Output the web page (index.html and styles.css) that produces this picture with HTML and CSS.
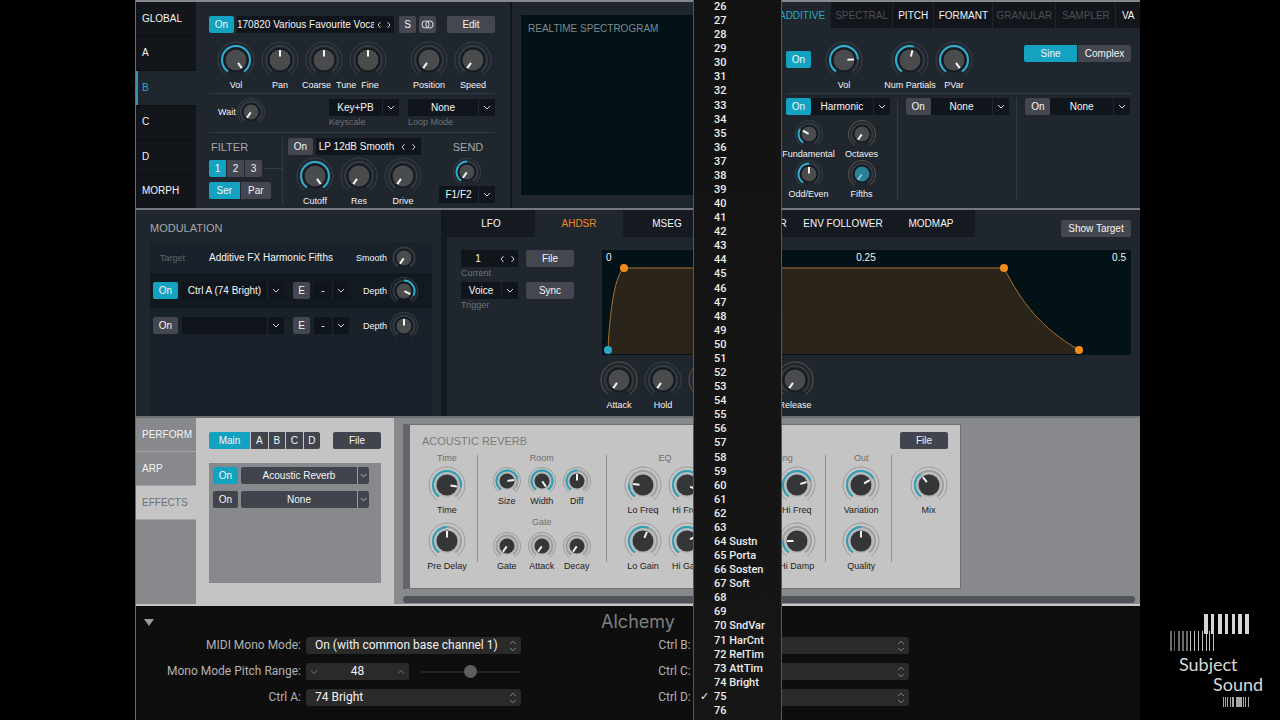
FILE: index.html
```html
<!DOCTYPE html>
<html lang="en">
<head>
<meta charset="utf-8">
<title>Alchemy</title>
<link rel="stylesheet" href="styles.css">
</head>
<body>
<svg class="defs" aria-hidden="true">
  <symbol id="down" viewBox="0 0 8 8"><path d="M1 2.5 4 5.5 7 2.5"/></symbol>
  <symbol id="up" viewBox="0 0 8 8"><path d="M1 5.5 4 2.5 7 5.5"/></symbol>
  <symbol id="left" viewBox="0 0 8 8"><path d="M5.5 1.2 3 4 5.5 6.8"/></symbol>
  <symbol id="right" viewBox="0 0 8 8"><path d="M2.5 1.2 5 4 2.5 6.8"/></symbol>
  <symbol id="updown" viewBox="0 0 8 12"><path d="M1 4.2 4 1.2 7 4.2M1 7.8 4 10.8 7 7.8"/></symbol>
  <symbol id="rings" viewBox="0 0 12 8"><circle cx="4.2" cy="4" r="3.2"/><circle cx="7.8" cy="4" r="3.2"/></symbol>
</svg>

<main class="synth">
  <section class="source">
    <nav class="side">
      <button>GLOBAL</button><button>A</button><button class="current">B</button><button>C</button><button>D</button><button>MORPH</button>
    </nav>

    <div class="osc">
      <div class="row">
        <button class="btn on">On</button>
        <div class="stepper name"><span class="value">170820 Various Favourite Voca</span><button aria-label="Previous"><svg class="ico"><use href="#left"/></svg></button><button aria-label="Next"><svg class="ico"><use href="#right"/></svg></button></div>
        <button class="btn sq">S</button>
        <button class="btn sq" aria-label="Link"><svg class="ico wide"><use href="#rings"/></svg></button>
        <button class="btn med edit">Edit</button>
      </div>
      <div class="row dials spread">
        <div class="row tight">
          <div class="dial"><i class="knob" data-v="100" data-arc="fill"></i>Vol</div>
          <div class="dial"><i class="knob" data-v="50"></i>Pan</div>
          <div class="tune">
            <div class="row tight"><div class="dial"><i class="knob" data-v="50"></i></div><div class="dial"><i class="knob" data-v="50"></i></div></div>
            <div class="tune-labels"><span>Coarse</span><span>Tune</span><span>Fine</span></div>
          </div>
        </div>
        <div class="row tight">
          <div class="dial"><i class="knob" data-v="0"></i>Position</div>
          <div class="dial"><i class="knob" data-v="0"></i>Speed</div>
        </div>
      </div>
      <div class="row scale">
        <div class="dial inline">Wait<i class="knob sm" data-v="0"></i></div>
        <label class="field keyscale"><span class="pick"><select><option>Key+PB</option></select><svg class="ico"><use href="#down"/></svg></span>Keyscale</label>
        <label class="field loop"><span class="pick"><select><option>None</option></select><svg class="ico"><use href="#down"/></svg></span>Loop Mode</label>
      </div>
      <div class="row filter">
        <div class="filter-left">
          <h2>FILTER</h2>
          <div class="wired"><div class="seg nums"><button class="on">1</button><button>2</button><button>3</button></div></div>
          <div class="seg routing"><button class="on">Ser</button><button>Par</button></div>
        </div>
        <div class="filter-mid">
          <div class="row snug"><button class="btn">On</button><div class="stepper"><span class="value">LP 12dB Smooth</span><button aria-label="Previous"><svg class="ico"><use href="#left"/></svg></button><button aria-label="Next"><svg class="ico"><use href="#right"/></svg></button></div></div>
          <div class="row filter-dials">
            <div class="dial"><i class="knob" data-v="100" data-arc="fill"></i>Cutoff</div>
            <div class="dial"><i class="knob" data-v="0"></i>Res</div>
            <div class="dial"><i class="knob" data-v="0"></i>Drive</div>
          </div>
        </div>
        <div class="send">
          <h2>SEND</h2>
          <i class="knob sm" data-v="0" data-arc="half"></i>
          <span class="pick"><select aria-label="Send routing"><option>F1/F2</option></select><svg class="ico"><use href="#down"/></svg></span>
        </div>
      </div>
    </div>

    <div class="spectro"><div class="screen">REALTIME SPECTROGRAM</div></div>

    <div class="engine">
      <nav class="engine-tabs">
        <button class="current">ADDITIVE</button><button class="off">SPECTRAL</button><button>PITCH</button><button>FORMANT</button><button class="off">GRANULAR</button><button class="off">SAMPLER</button><button>VA</button>
      </nav>
      <div class="engine-main">
        <button class="btn on">On</button>
        <div class="dial first"><i class="knob" data-v="80" data-arc="fill"></i>Vol</div>
        <div class="dial"><i class="knob" data-v="55" data-arc="fill"></i>Num Partials</div>
        <div class="dial"><i class="knob" data-v="100" data-arc="fill"></i>PVar</div>
        <div class="seg shape"><button class="on">Sine</button><button>Complex</button></div>
      </div>
      <div class="effects3">
        <div class="fx">
          <div class="row joined"><button class="btn on">On</button><span class="pick"><select aria-label="Effect 1"><option>Harmonic</option></select><svg class="ico"><use href="#down"/></svg></span></div>
          <div class="fx-dials">
            <div class="dial"><i class="knob sm" data-v="29" data-arc="fill"></i>Fundamental</div>
            <div class="dial"><i class="knob sm mod" data-v="0"></i>Octaves</div>
            <div class="dial"><i class="knob sm" data-v="50" data-arc="fill"></i>Odd/Even</div>
            <div class="dial"><i class="knob sm mod picked" data-v="0"></i>Fifths</div>
          </div>
        </div>
        <div class="fx"><div class="row joined"><button class="btn">On</button><span class="pick"><select aria-label="Effect 2"><option>None</option></select><svg class="ico"><use href="#down"/></svg></span></div></div>
        <div class="fx"><div class="row joined"><button class="btn">On</button><span class="pick"><select aria-label="Effect 3"><option>None</option></select><svg class="ico"><use href="#down"/></svg></span></div></div>
      </div>
    </div>
  </section>

  <section class="modsec">
    <div class="modulation">
      <h2>MODULATION</h2>
      <div class="modlist">
        <div class="modhead"><span class="muted">Target</span><span class="target">Additive FX Harmonic Fifths</span><div class="dial inline">Smooth<i class="knob sm bare" data-v="0"></i></div></div>
        <div class="modrow active">
          <button class="btn on">On</button>
          <span class="pick"><select aria-label="Source 1"><option>Ctrl A (74 Bright)</option></select><svg class="ico"><use href="#down"/></svg></span>
          <button class="btn sq">E</button>
          <span class="pick map"><select aria-label="Map 1"><option>-</option></select><svg class="ico"><use href="#down"/></svg></span>
          <div class="dial inline">Depth<i class="knob sm" data-v="90" data-arc="bi"></i></div>
        </div>
        <div class="modrow">
          <button class="btn">On</button>
          <span class="pick"><select aria-label="Source 2"><option></option></select><svg class="ico"><use href="#down"/></svg></span>
          <button class="btn sq">E</button>
          <span class="pick map"><select aria-label="Map 2"><option>-</option></select><svg class="ico"><use href="#down"/></svg></span>
          <div class="dial inline">Depth<i class="knob sm" data-v="50"></i></div>
        </div>
      </div>
    </div>
    <div class="envelope">
      <div class="env-head">
        <nav class="env-tabs"><button>LFO</button><button class="current">AHDSR</button><button>MSEG</button><button>SEQUENCER</button><button>ENV FOLLOWER</button><button>MODMAP</button></nav>
        <button class="btn show">Show Target</button>
      </div>
      <div class="env-body">
        <div class="env-ctl">
          <label class="field"><span class="stepper"><span class="value">1</span><svg class="ico"><use href="#left"/></svg><svg class="ico"><use href="#right"/></svg></span>Current</label>
          <button class="btn">File</button>
          <label class="field"><span class="pick"><select><option>Voice</option></select><svg class="ico"><use href="#down"/></svg></span>Trigger</label>
          <button class="btn">Sync</button>
        </div>
        <div class="env-main">
          <div class="graph">
            <svg viewBox="0 0 529 105" preserveAspectRatio="none">
              <path class="area" d="M6 100C8 54 14 24 22 18H402C420 53 439 78 477 100V104H6Z"/>
              <path class="line" d="M6 100C8 54 14 24 22 18H402C420 53 439 78 477 100"/>
              <circle class="start" cx="6" cy="100" r="4"/><circle cx="22" cy="18" r="4"/><circle cx="402" cy="18" r="4"/><circle cx="477" cy="100" r="4"/>
            </svg>
            <div class="scale-marks"><span>0</span><span>0.25</span><span>0.5</span></div>
          </div>
          <div class="row tight env-dials">
            <div class="dial"><i class="knob mod" data-v="0"></i>Attack</div>
            <div class="dial"><i class="knob" data-v="0"></i>Hold</div>
            <div class="dial" aria-label="Decay"><i class="knob mod" data-v="0"></i></div>
            <div class="dial" aria-label="Sustain"><i class="knob mod" data-v="0"></i></div>
            <div class="dial"><i class="knob mod" data-v="0"></i>Release</div>
          </div>
        </div>
      </div>
    </div>
  </section>

  <section class="effects">
    <nav class="pages"><button>PERFORM</button><button>ARP</button><button class="current">EFFECTS</button></nav>
    <div class="chain">
      <div class="row spread"><div class="seg dark"><button class="on">Main</button><button>A</button><button>B</button><button>C</button><button>D</button></div><button class="btn dark med">File</button></div>
      <div class="slots">
        <div class="row snug"><button class="btn on">On</button><span class="pick slot"><select aria-label="Slot 1"><option>Acoustic Reverb</option></select><svg class="ico"><use href="#down"/></svg></span></div>
        <div class="row snug"><button class="btn dark">On</button><span class="pick slot"><select aria-label="Slot 2"><option>None</option></select><svg class="ico"><use href="#down"/></svg></span></div>
      </div>
    </div>
    <div class="rack">
      <div class="reverb">
        <div class="row spread"><h2>ACOUSTIC REVERB</h2><button class="btn dark med">File</button></div>
        <div class="groups">
          <div class="group"><h3>Time</h3><div class="knobs"><div class="dial"><i class="knob light" data-v="84" data-arc="fill"></i>Time</div><div class="dial"><i class="knob light" data-v="50" data-arc="fill"></i>Pre Delay</div></div></div>
          <div class="group room"><h3>Room</h3>
            <div class="trio"><div class="dial"><i class="knob sm light bare" data-v="78" data-arc="fill"></i>Size</div><div class="dial"><i class="knob sm light" data-v="100" data-arc="fill"></i>Width</div><div class="dial"><i class="knob sm light" data-v="50" data-arc="fill"></i>Diff</div></div>
            <h3 class="lower">Gate</h3>
            <div class="trio"><div class="dial"><i class="knob sm light" data-v="0"></i>Gate</div><div class="dial"><i class="knob sm light" data-v="0"></i>Attack</div><div class="dial"><i class="knob sm light" data-v="0"></i>Decay</div></div>
          </div>
          <div class="group"><h3>EQ</h3><div class="knobs two"><div class="dial"><i class="knob light" data-v="21" data-arc="fill"></i>Lo Freq</div><div class="dial"><i class="knob light" data-v="90" data-arc="fill"></i>Hi Freq</div><div class="dial"><i class="knob light" data-v="58" data-arc="fill"></i>Lo Gain</div><div class="dial"><i class="knob light" data-v="71" data-arc="fill"></i>Hi Gain</div></div></div>
          <div class="group"><h3>Damping</h3><div class="knobs two"><div class="dial" aria-label="Lo Freq"><i class="knob light" data-v="30" data-arc="fill"></i></div><div class="dial"><i class="knob light" data-v="75" data-arc="fill"></i>Hi Freq</div><div class="dial" aria-label="Lo Damp"><i class="knob light" data-v="30" data-arc="fill"></i></div><div class="dial"><i class="knob light" data-v="19" data-arc="fill"></i>Hi Damp</div></div></div>
          <div class="group"><h3>Out</h3><div class="knobs"><div class="dial"><i class="knob light bare" data-v="71" data-arc="fill"></i>Variation</div><div class="dial"><i class="knob light bare" data-v="50" data-arc="fill"></i>Quality</div></div></div>
          <div class="group"><h3>&nbsp;</h3><div class="knobs"><div class="dial"><i class="knob light" data-v="37" data-arc="fill"></i>Mix</div></div></div>
        </div>
      </div>
      <div class="scrollbar"></div>
    </div>
  </section>

  <section class="inspector">
    <header><button class="disclose" aria-label="Collapse"><svg viewBox="0 0 10 8"><path d="M0 1H10L5 8Z"/></svg></button><h1>Alchemy</h1></header>
    <div class="settings">
      <label for="mono">MIDI Mono Mode:</label>
      <span class="popup"><select id="mono"><option>On (with common base channel 1)</option></select><svg class="ico tall"><use href="#updown"/></svg></span>
      <label for="cb">Ctrl B:</label>
      <span class="popup"><select id="cb"><option></option></select><svg class="ico tall"><use href="#updown"/></svg></span>
      <label for="range">Mono Mode Pitch Range:</label>
      <div class="pitch"><span class="number"><svg class="ico"><use href="#down"/></svg><input id="range" type="text" value="48"><svg class="ico"><use href="#up"/></svg></span><input class="slider" type="range" min="0" max="96" value="47" aria-label="Pitch range"></div>
      <label for="cc">Ctrl C:</label>
      <span class="popup"><select id="cc"><option></option></select><svg class="ico tall"><use href="#updown"/></svg></span>
      <label for="ca">Ctrl A:</label>
      <span class="popup"><select id="ca"><option>74 Bright</option></select><svg class="ico tall"><use href="#updown"/></svg></span>
      <label for="cd">Ctrl D:</label>
      <span class="popup"><select id="cd"><option></option></select><svg class="ico tall"><use href="#updown"/></svg></span>
    </div>
  </section>

  <ul class="menu" role="listbox" aria-label="Ctrl D"></ul>
</main>

<aside class="brand">
  <svg viewBox="0 0 94 42" class="keys">
    <g fill="#d6d6d6"><path d="M34 2h4v20h-4zM41 2h3v20h-3zM48 2h4v20h-4zM55 2h3v20h-3zM62 2h3v20h-3zM68 2h4v20h-4zM75 2h4v20h-4z"/></g>
    <g fill="#6a6a6a"><path d="M0 19h2v20h-2zM4 19h1v20h-1zM8 19h2v20h-2zM12 19h2v20h-2zM16 19h2v20h-2z"/></g>
    <g fill="#c0c0c0"><path d="M20 19h1v20h-1zM24 19h1v20h-1zM28 19h1v20h-1zM32 19h1v20h-1zM36 19h1v20h-1zM39 19h1v20h-1zM43 19h1v20h-1z"/></g>
  </svg>
  <p>Subject</p>
  <p class="second">Sound</p>
  <svg viewBox="0 0 94 14" class="keys small"><g fill="#a8a8a8"><path d="M53 3h1v10h-1zM55 3h1v10h-1zM57 3h1v10h-1zM60 3h1v10h-1zM62 3h2v10h-2zM66 3h6v10h-6zM73 3h1v10h-1zM75 3h1v10h-1zM78 3h1v10h-1z"/></g></svg>
</aside>
<script src="script.js"></script>
</body>
</html>
```

FILE: styles.css
```css
* { box-sizing: border-box; }
body {
  margin: 0;
  min-height: 100vh;
  display: grid;
  grid-template-columns: 135px minmax(0, 1fr) 140px;
  background: #000;
  color: #f4f5f6;
  font: 10px/12px "Liberation Sans", Arial, sans-serif;
  overflow: hidden;
}
h1, h2, h3, p, ul { margin: 0; padding: 0; font-weight: 400; }
button, select, input { font: inherit; color: inherit; border: 0; margin: 0; padding: 0; background: none; }
select { appearance: none; flex: 1; min-width: 0; height: 17px; text-align: center; text-align-last: center; outline: 0; }
.defs { position: absolute; width: 0; height: 0; }
.ico { width: 8px; height: 8px; flex: none; fill: none; stroke: #d4d6d8; stroke-width: 1; }
.ico.wide { width: 13px; height: 9px; vertical-align: middle; }
.ico.tall { width: 8px; height: 12px; stroke: #858585; }
h2 { font-size: 11px; color: #a4a8ac; }

.synth {
  grid-column: 2;
  position: relative;
  display: flex;
  flex-direction: column;
  border-left: 1px solid #6b6e72;
  border-top: 2px solid #85888c;
}

/* shared controls */
.row { display: flex; align-items: center; }
.row.snug { gap: 3px; }
.spread { justify-content: space-between; }
.btn { min-width: 25px; height: 17px; border-radius: 2px; background: #44474f; text-align: center; }
.btn.sq { min-width: 17px; }
.btn.med { min-width: 48px; }
.btn.on, .seg .on { background: #14a2c1; }
.btn.dark, .seg.dark button { background: #41444c; }
.seg.dark button.on { background: #14a2c1; }
.seg { display: flex; gap: 1px; border-radius: 2px; overflow: hidden; }
.seg button { flex: 1; height: 17px; background: #44474f; }
.stepper, .pick {
  display: flex;
  align-items: center;
  height: 17px;
  background: #10151c;
  color: #f4f5f6;
  flex: 1;
  min-width: 0;
}
.stepper .value { flex: 1; text-align: center; white-space: nowrap; overflow: hidden; }
.stepper button { width: 11px; display: flex; justify-content: center; }
.pick .ico { width: 17px; padding: 0 4px; border-left: 1px solid #20262d; height: 17px; }
.field { display: flex; flex-direction: column; font-size: 9px; color: #6e737a; }
.field .pick, .field .stepper { flex: none; font-size: 10px; }
.dial {
  width: 44px;
  display: flex;
  flex-direction: column;
  align-items: center;
  font-size: 9px;
  white-space: nowrap;
}
.dial.inline { flex-direction: row; width: auto; }
.knob { display: block; width: 38px; height: 38px; flex: none; }
.knob.sm { width: 28px; height: 28px; }
.knob svg { display: block; width: 100%; height: 100%; overflow: visible; }
.knob path { fill: none; }
.knob .outer { stroke: #3a4047; stroke-width: 1; }
.knob .inner { stroke: #343a41; stroke-width: 2; }
.knob .arc { stroke: #2bb0d0; stroke-width: 2; }
.knob .shade { fill: #15191f; }
.knob .body { fill: #4a4b4d; }
.knob .tick { stroke: #f4f4f4; stroke-width: 2; }
.knob.mod .outer { stroke: #645545; }
.knob.bare .outer { stroke: none; }
.knob.picked .body { fill: #2b7f94; }
.knob.picked .tick { stroke: #7fc9dc; }
.knob.light .outer { stroke: #9b9b9b; }
.knob.light .inner { stroke: #9d9d9d; }
.knob.light .arc { stroke: #2c9fba; }
.knob.light .shade { fill: #b4b4b4; }
.knob.light .body { fill: #353637; }

/* source section */
.source {
  display: grid;
  grid-template-columns: 60px minmax(0, 314fr) minmax(0, 264fr) minmax(0, 366fr);
  min-height: 206px;
  background: #1f262d;
}
.side { display: grid; grid-auto-rows: 1fr; background: #0b0e12; gap: 1px; }
.side button { background: #12161b; text-align: left; padding-left: 6px; }
.side .current { background: #1f262d; color: #27a9c9; border-left: 2px solid #3d91b5; padding-left: 4px; }
.osc { padding: 14px 15px 0 13px; }
.name { margin: 0 5px 0 3px; }
.name .value { text-align: left; }
.name button { width: 10px; }
.osc .btn.sq { margin-right: 3px; }
.edit { margin-left: 8px; }
.dials { margin-top: 8px; padding: 0 0 2px 5px; border-bottom: 1px solid #323940; }
.tune-labels { display: flex; gap: 5px; font-size: 9px; }
.scale { align-items: flex-start; padding: 4px 0 4px 9px; border-bottom: 1px solid #323940; }
.scale .inline { flex: 1; gap: 1px; }
.scale .field { margin-top: 1px; }
.keyscale { width: 70px; margin-right: 9px; }
.loop { width: 87px; }
.filter { align-items: stretch; }
.filter-left { width: 74px; margin: 4px 0 2px; padding: 4px 0 0; border-right: 1px solid #323940; display: flex; flex-direction: column; }
.filter-left h2, .send h2 { padding-left: 2px; }
.filter-left h2 { margin-bottom: 7px; }
.wired { display: flex; align-items: center; gap: 2px; margin-bottom: 5px; }
.wired::after { content: ""; flex: 1; height: 1px; background: #323940; }
.nums { width: 53px; }
.routing { width: 62px; }
.filter-mid { padding: 5px 0 0 5px; width: 138px; }
.filter-dials { margin: 2px 0 0 5px; }
.filter-dials .dial { flex: none; }
.filter-mid .stepper { padding-right: 2px; }
.send { width: 56px; margin-left: auto; padding-top: 8px; display: flex; flex-direction: column; align-items: center; }
.send h2 { margin-bottom: 5px; }
.send .pick { flex: none; width: 100%; }
.spectro { padding: 13px 8px 13px 9px; border-left: 2px solid #12161b; display: flex; }
.screen { flex: 1; background: #021217; color: #7e8a8f; padding: 8px 7px; white-space: nowrap; }
.engine { display: flex; flex-direction: column; }
.engine-tabs { display: grid; grid-template-columns: 57fr 62fr 41fr 59fr 63fr 60fr 24fr; gap: 1px; height: 26px; background: #20262d; }
.engine-tabs button { background: #12161b; padding: 2px 0 0; white-space: nowrap; min-width: 0; overflow: hidden; }
.engine-tabs .current { background: #1f262d; color: #27a9c9; }
.engine-tabs .off { color: #4b4f54; }
.engine-main { display: flex; align-items: center; margin: 0 8px 0 12px; padding: 13px 1px 2px 0; border-bottom: 1px solid #323940; }
.engine-main > .btn { margin-bottom: 13px; }
.engine-main .first { margin: 0 22px 0 11px; }
.shape { width: 107px; margin: 0 0 25px auto; }
.effects3 { flex: 1; display: grid; grid-template-columns: repeat(3, minmax(0, 1fr)); margin: 4px 3px 8px 4px; }
.fx { padding: 0 7px 0 8px; border-right: 1px solid #323940; }
.fx:last-child { border: 0; }
.fx-dials { display: grid; grid-template-columns: 53px 53px; margin: 5px 0 0 -4px; }
.fx-dials .dial { width: auto; }

/* modulation section */
.modsec {
  display: grid;
  grid-template-columns: minmax(0, 305fr) minmax(0, 699fr);
  min-height: 208px;
  border-top: 2px solid #74777b;
  background: #1f262d;
}
.modulation { padding: 12px 9px 0 14px; display: flex; flex-direction: column; }
.modlist { flex: 1; margin-top: 9px; background: #19222a; }
.modhead, .modrow { display: flex; align-items: center; padding: 0 14px 0 3px; }
.modhead { height: 30px; padding-left: 10px; }
.muted { color: #5e646b; font-size: 9px; width: 26px; }
.target { flex: 1; text-align: center; }
.modrow { height: 35px; gap: 4px; }
.modrow.active { background: #131920; }
.modrow .btn.sq { margin-left: 5px; }
.modrow .map { flex: none; width: 35px; }
.modrow .dial { margin-left: auto; padding-left: 10px; }
.modlist .inline { gap: 3px; }
.envelope { border-left: 6px solid #141920; display: flex; flex-direction: column; }
.env-head { display: flex; justify-content: space-between; align-items: flex-start; padding-right: 9px; }
.env-tabs { display: grid; grid-template-columns: repeat(6, 1fr); flex: 0 1 528px; }
.env-tabs button { height: 27px; background: #151a20; white-space: nowrap; }
.env-tabs .current { background: #1f262d; color: #ee8d1e; }
.show { width: 70px; margin-top: 10px; }
.env-body { display: flex; padding: 13px 9px 0 14px; gap: 28px; }
.env-ctl { display: grid; grid-template-columns: 57px 48px; gap: 3px 8px; align-content: start; align-items: start; }
.env-ctl .stepper { gap: 3px; padding-right: 1px; }
.env-main { flex: 1; min-width: 0; }
.graph { position: relative; background: #021217; height: 105px; }
.graph svg { display: block; width: 100%; height: 100%; }
.graph .area { fill: #2a241b; }
.graph .line { fill: none; stroke: #a8702c; stroke-width: 1; }
.graph circle { fill: #f28c18; }
.graph .start { fill: #27a9c9; }
.scale-marks { position: absolute; inset: 2px 5px auto 4px; display: grid; grid-template-columns: 1fr auto 1fr; }
.scale-marks span:last-child { text-align: right; }
.env-dials { margin: 6px 0 0 -5px; align-items: flex-start; }

/* effects section */
.effects {
  display: grid;
  grid-template-columns: 60px minmax(0, 198fr) minmax(0, 746fr);
  min-height: 190px;
  border-top: 2px solid #6e7175;
  border-bottom: 2px solid #c8c8c8;
  background: #87898c;
}
.pages { display: flex; flex-direction: column; }
.pages button { height: 34px; text-align: left; padding-left: 6px; border-bottom: 1px solid #a3a5a8; white-space: nowrap; }
.pages .current { background: #c4c4c4; color: #6c6f73; }
.chain { background: #c4c4c4; padding: 14px 13px 21px; display: flex; flex-direction: column; gap: 14px; }
.seg.dark { width: 111px; }
.seg.dark .on { flex: 0 0 41px; }
.slots { flex: 1; background: #87898c; padding: 4px 12px 4px 4px; display: flex; flex-direction: column; gap: 7px; }
.slot { background: #41444c; border-radius: 2px; }
.slot .ico { width: 12px; padding: 0 2px; border-left-color: #9a9ca0; }
.rack {
  padding: 6px 5px 1px 9px;
  display: grid;
  grid-template-columns: minmax(0, 558fr) minmax(0, 174fr);
  grid-template-rows: 1fr auto;
}
.reverb {
  background: #c4c4c4;
  color: #1d1d1d;
  border: 1px solid #6f7175;
  border-left: 7px solid #61646a;
  padding: 7px 0 0;
}
.reverb > .row { padding: 0 12px; }
.reverb h2 { color: #7c7c7c; }
.reverb .btn { color: #f0f1f2; }
.groups { display: grid; grid-template-columns: 68fr 129fr 113fr 107fr 66fr 68fr; margin-top: 6px; }
.group { border-right: 1px solid #909090; height: 107px; display: flex; flex-direction: column; align-items: center; }
.group:first-child { padding-left: 7px; }
.group:nth-child(n+3) { padding-left: 5px; }
.group:last-child { border: 0; }
.group h3 { font-size: 9px; color: #6e6e6e; margin: -3px 0 2px; }
.knobs { display: grid; gap: 6px 0; grid-auto-rows: 50px; }
.knobs.two { grid-template-columns: 44px 44px; }
.trio { display: flex; margin-top: 1px; }
.trio .dial { width: 35px; }
.group h3.lower { margin: 9px 0 3px; }
.scrollbar { grid-column: 1 / -1; height: 7px; margin-top: 7px; border-radius: 4px; background: #505359; }

/* inspector */
.inspector { flex: 1; background: #0e0e0e; color: #b2b2b2; font: 12px/17px Roboto, Inter, sans-serif; }
.inspector header { display: grid; grid-template-columns: 1fr auto 1fr; align-items: center; height: 31px; }
.inspector h1 { font-family: Inter, Roboto, sans-serif; font-size: 18px; color: #7f7f7f; }
.disclose { justify-self: start; margin-left: 8px; width: 10px; height: 8px; display: flex; }
.disclose svg { width: 10px; height: 8px; fill: #9c9c9c; }
.settings {
  display: grid;
  grid-template-columns: 165px minmax(0, 215fr) minmax(0, 164fr) minmax(0, 213fr);
  gap: 9px 5px;
  padding-right: 23%;
}
.settings label { text-align: right; white-space: nowrap; }
.popup, .number { display: flex; align-items: center; height: 17px; padding-right: 4px; background: #2a2a2a; border-radius: 3px; color: #f2f2f2; }
.popup select { text-align: left; text-align-last: left; padding-left: 9px; }
.pitch { display: flex; gap: 12px; }
.number { width: 103px; padding: 0 4px; border-radius: 2px; }
.number input { flex: 1; min-width: 0; width: 20px; text-align: center; outline: 0; }
.number .ico { stroke: #777; }
.slider { appearance: none; flex: 1; min-width: 0; height: 17px; }
.slider::-webkit-slider-runnable-track { height: 2px; background: #242424; }
.slider::-webkit-slider-thumb { appearance: none; width: 13px; height: 13px; margin-top: -6px; border-radius: 50%; background: #5e5e5e; }

/* controller menu, laid over the window */
.menu {
  position: absolute;
  top: -2px;
  bottom: 0;
  left: 557px;
  width: 89px;
  padding-bottom: 2px;
  display: grid;
  grid-auto-rows: 1fr;
  list-style: none;
  background: linear-gradient(#121212, #161616);
  border: solid #57585a;
  border-width: 0 1px;
  font: 500 11px/14px Roboto, Inter, sans-serif;
  color: #ececec;
}
.menu li { display: grid; grid-template-columns: 14px 1fr; padding-left: 6px; min-height: 0; white-space: nowrap; }
.menu li::before { content: ""; }
.menu li[aria-selected="true"]::before { content: "✓"; font-family: "DejaVu Sans", sans-serif; font-weight: 700; }

/* brand mark */
.brand { align-self: end; padding: 0 16px 12px 30px; color: #d8d8d8; font: 300 18px/20px Lato, sans-serif; }
.keys { display: block; width: 94px; height: 42px; }
.keys.small { height: 14px; }
.brand p { padding-left: 9px; }
.brand .second { padding-left: 43px; }
```

FILE: script.js
```js
const SWEEP = 145;

function point(c, r, deg) {
  const a = (deg - 90) * Math.PI / 180;
  return (c + r * Math.cos(a)).toFixed(2) + " " + (c + r * Math.sin(a)).toFixed(2);
}

function arc(c, r, from, to) {
  return "M" + point(c, r, from) + "A" + r + " " + r + " 0 " + (to - from > 180 ? 1 : 0) + " 1 " + point(c, r, to);
}

document.querySelectorAll(".knob").forEach(function (el) {
  const small = el.classList.contains("sm");
  const c = small ? 14 : 19;
  const ring = small ? 10.5 : 14;
  const body = small ? 7.5 : 10.5;
  const outer = small ? 13.5 : 18;
  const angle = (el.dataset.v / 50 - 1) * SWEEP;
  const spans = { fill: [-SWEEP, angle], bi: [0, angle], half: [-SWEEP, 0] };
  const span = spans[el.dataset.arc];
  el.innerHTML =
    '<svg viewBox="0 0 ' + 2 * c + " " + 2 * c + '">' +
    '<path class="outer" d="' + arc(c, outer, -SWEEP, SWEEP) + '"/>' +
    '<path class="inner" d="' + arc(c, ring, -SWEEP, SWEEP) + '"/>' +
    (span ? '<path class="arc" d="' + arc(c, ring, span[0], span[1]) + '"/>' : "") +
    '<circle class="shade" cx="' + c + '" cy="' + c + '" r="' + (body + 1.5) + '"/>' +
    '<circle class="body" cx="' + c + '" cy="' + c + '" r="' + body + '"/>' +
    '<path class="tick" d="M' + point(c, body - 7, angle) + "L" + point(c, body - 0.5, angle) + '"/></svg>';
});

const names = { 64: "Sustn", 65: "Porta", 66: "Sosten", 67: "Soft", 70: "SndVar", 71: "HarCnt", 72: "RelTim", 73: "AttTim", 74: "Bright" };
const menu = document.querySelector(".menu");
for (let n = 26; n <= 76; n++) {
  const li = document.createElement("li");
  li.setAttribute("role", "option");
  li.setAttribute("aria-selected", n === 75);
  const text = document.createElement("span");
  text.textContent = names[n] ? n + " " + names[n] : n;
  li.append(text);
  menu.append(li);
}
```
